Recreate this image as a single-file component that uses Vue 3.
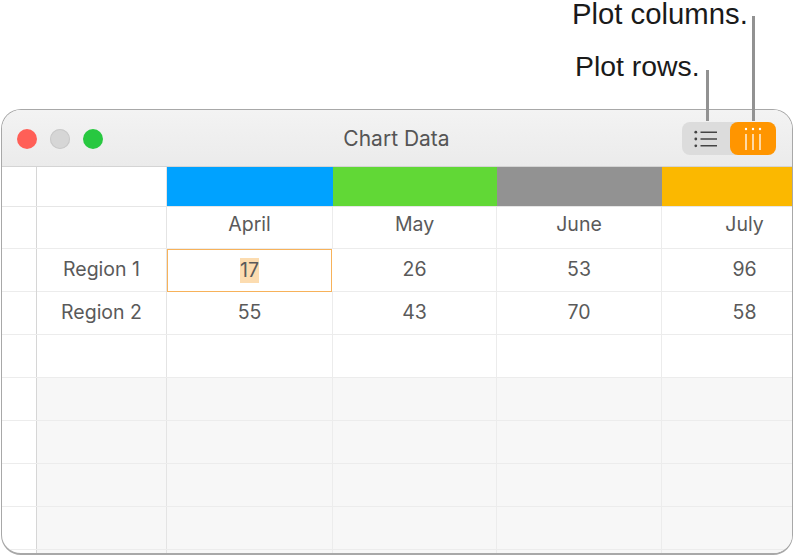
<template>
  <div class="page">
    <!-- callouts over the toolbar -->
    <span class="callout callout-columns">Plot columns.</span>
    <span class="callout callout-rows">Plot rows.</span>
    <i class="leader leader-columns"></i>
    <i class="leader leader-rows"></i>

    <div class="window">
      <div class="titlebar">
        <div class="lights">
          <span class="light red"></span>
          <span class="light grey"></span>
          <span class="light green"></span>
        </div>
        <div class="title">Chart Data</div>
        <div class="segmented">
          <div class="seg">
            <svg width="24" height="18" viewBox="0 0 24 18">
              <g fill="#444">
                <circle cx="1.8" cy="2.2" r="1.4" />
                <circle cx="1.8" cy="9" r="1.4" />
                <circle cx="1.8" cy="15.8" r="1.4" />
              </g>
              <g stroke="#444" stroke-width="1.6">
                <line x1="6.5" y1="2.2" x2="23" y2="2.2" />
                <line x1="6.5" y1="9" x2="23" y2="9" />
                <line x1="6.5" y1="15.8" x2="23" y2="15.8" />
              </g>
            </svg>
          </div>
          <div class="seg active">
            <svg width="18" height="24" viewBox="0 0 18 24">
              <g fill="#fff">
                <circle cx="2" cy="2" r="1.2" />
                <circle cx="9" cy="2" r="1.2" />
                <circle cx="16" cy="2" r="1.2" />
              </g>
              <g stroke="#fff" stroke-width="1.3">
                <line x1="2" y1="7" x2="2" y2="23" />
                <line x1="9" y1="7" x2="9" y2="23" />
                <line x1="16" y1="7" x2="16" y2="23" />
              </g>
            </svg>
          </div>
        </div>
      </div>

      <div class="sheet">
        <div class="row colors">
          <div class="cell"></div>
          <div class="cell"></div>
          <div v-for="c in colors" :key="c" class="cell swatch" :style="{ background: c }"></div>
        </div>
        <div
          v-for="(r, i) in rows"
          :key="i"
          class="row"
          :class="{ 'head-row': i === 0, shaded: i > 3, 'last-row': i === rows.length - 1 }"
        >
          <div class="cell"></div>
          <div
            v-for="(v, j) in r"
            :key="j"
            class="cell"
            :class="{ selected: i === 1 && j === 1 }"
          >
            <span v-if="i === 1 && j === 1" class="sel-text">{{ v }}</span>
            <template v-else>{{ v }}</template>
          </div>
        </div>
      </div>
    </div>
  </div>
</template>

<script setup>
const colors = ['#00a2ff', '#61d836', '#929292', '#fbb800']

const rows = [
  ['', 'April', 'May', 'June', 'July'],
  ['Region 1', '17', '26', '53', '96'],
  ['Region 2', '55', '43', '70', '58'],
  ['', '', '', '', ''],
  ['', '', '', '', ''],
  ['', '', '', '', ''],
  ['', '', '', '', ''],
  ['', '', '', '', ''],
  ['', '', '', '', '']
]
</script>

<style>
html,
body {
  margin: 0;
  background: #fff;
}
</style>

<style scoped>
.page {
  position: relative;
  width: 796px;
  height: 556px;
  padding-top: 109px;
  box-sizing: border-box;
  overflow: hidden;
  font-family: Inter, "Liberation Sans", sans-serif;
}

.callout {
  position: absolute;
  font-family: "Liberation Sans", Arial, sans-serif;
  color: #1a1a1a;
  white-space: nowrap;
}

.callout-columns {
  left: 572px;
  top: 0;
  font-size: 29.3px;
  line-height: 27px;
}

.callout-rows {
  left: 575px;
  top: 50px;
  font-size: 28.4px;
  line-height: 32px;
}

.leader {
  position: absolute;
  width: 3px;
  background: #929292;
  z-index: 2;
}

.leader-columns {
  left: 752px;
  top: 16px;
  height: 105px;
}

.leader-rows {
  left: 706px;
  top: 70px;
  height: 51px;
}

.window {
  width: 792px;
  height: 446px;
  margin-left: 1px;
  box-sizing: border-box;
  border: 1px solid #a8a8a8;
  border-bottom: 2px solid #a8a8a8;
  border-radius: 20px;
  overflow: hidden;
  background: #fff;
}

.titlebar {
  display: grid;
  grid-template-columns: 1fr auto 1fr;
  align-items: center;
  height: 57px;
  box-sizing: border-box;
  padding: 1px 16px 0 15px;
  background: linear-gradient(#f3f3f3, #ebebeb);
  border-bottom: 1px solid #d4d4d4;
}

.lights {
  display: flex;
  gap: 13px;
}

.light {
  width: 20px;
  height: 20px;
  border-radius: 50%;
}

.red {
  background: #ff5f57;
}

.grey {
  background: #d6d6d6;
  box-shadow: inset 0 0 0 1px #c9c9c9;
}

.green {
  background: #28c840;
}

.title {
  text-align: center;
  font-size: 21px;
  color: #555;
}

.segmented {
  justify-self: end;
  display: flex;
  width: 94px;
  height: 33px;
  background: #dcdcdc;
  border-radius: 8px;
}

.seg {
  flex: 1;
  display: flex;
  align-items: center;
  justify-content: center;
}

.seg.active {
  flex: 0 0 46px;
  background: #ff9500;
  border-radius: 8px;
}

.row {
  display: grid;
  grid-template-columns: 35px 130px 166px 164px 165px 165px;
  height: 43px;
  box-sizing: border-box;
  border-bottom: 1px solid #ececec;
}

.row.colors {
  height: 40px;
  border-bottom-color: #e6e6e6;
}

.row.head-row {
  height: 42px;
}

.row.head-row .cell {
  padding-bottom: 8px;
}

.row.last-row {
  border-bottom: 0;
}

.cell {
  display: flex;
  align-items: center;
  justify-content: center;
  padding-bottom: 3px;
  border-right: 1px solid #ececec;
  font-size: 19.5px;
  color: #5a5a5a;
  box-sizing: border-box;
}

.cell:first-child {
  border-right-color: #d6d6d6;
}

.cell:nth-child(2) {
  border-right-color: #e4e4e4;
}

.cell:last-child {
  border-right: 0;
}

.swatch {
  border-right: 0 !important;
}

.shaded .cell:not(:first-child) {
  background: #f7f7f7;
}

.cell.selected {
  border-right: 0;
  margin-right: 1px;
  height: 43px;
  padding-bottom: 1px;
  box-shadow: inset 0 0 0 1px #f7b25a;
}

.sel-text {
  background: #fcdcb0;
  line-height: 25px;
}
</style>
